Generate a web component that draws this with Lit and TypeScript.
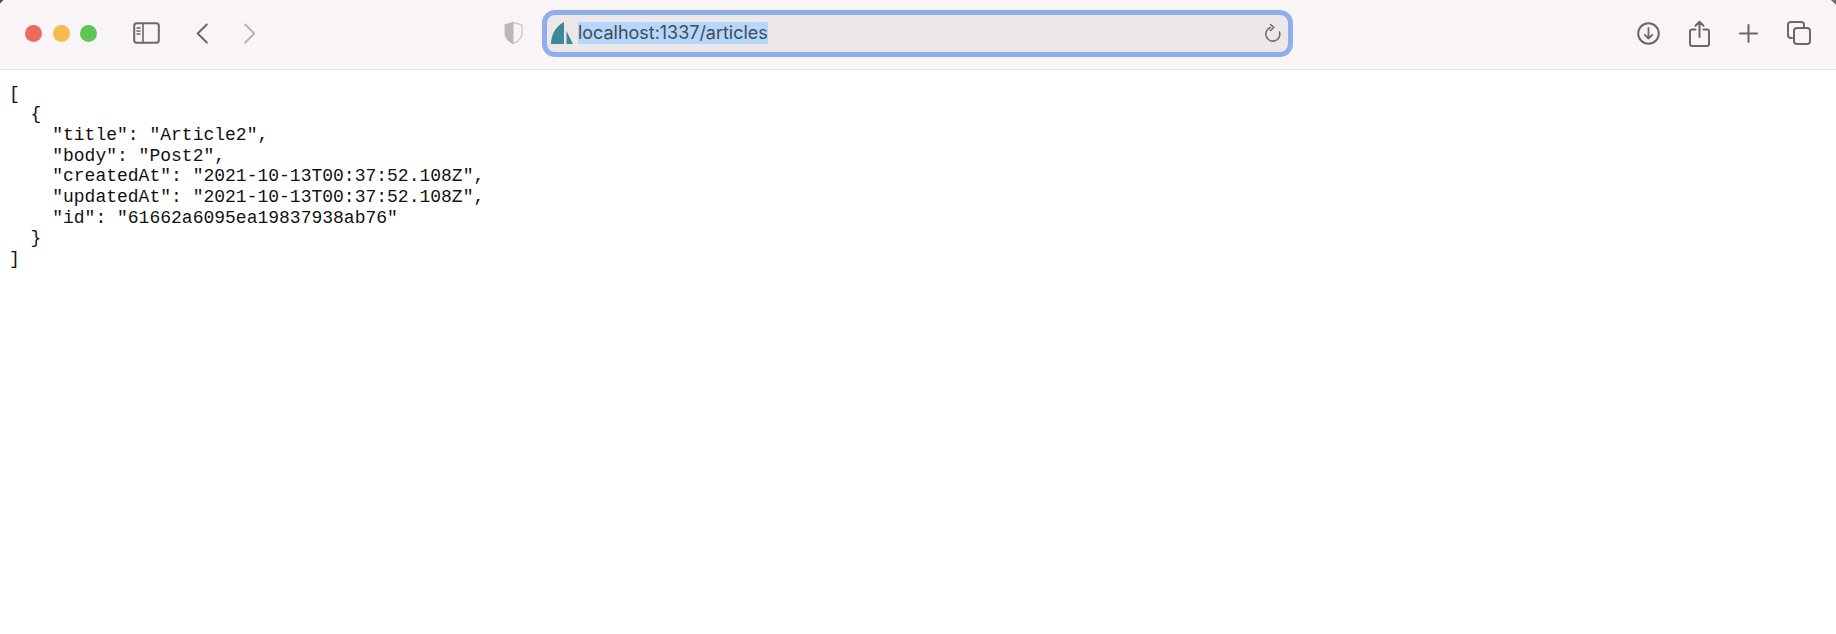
import { LitElement, html, css } from "lit";
import { customElement } from "lit/decorators.js";

const JSON_TEXT = `[
  {
    "title": "Article2",
    "body": "Post2",
    "createdAt": "2021-10-13T00:37:52.108Z",
    "updatedAt": "2021-10-13T00:37:52.108Z",
    "id": "61662a6095ea19837938ab76"
  }
]`;

@customElement("app-root")
export class AppRoot extends LitElement {
  static styles = css`
    :host { display: block; width: 1836px; height: 634px; background: #fff; overflow: hidden; position: relative; }
    .toolbar { height: 70px; box-sizing: border-box; border-bottom: 1px solid #e6e2e3; background: #f9f4f5; display: flex; align-items: center; padding: 0 0 3px 25px; }
    .lights { display: flex; gap: 10.5px; }
    .light { width: 17px; height: 17px; border-radius: 50%; }
    .red { background: #ee6a5f; } .yellow { background: #f5bd4f; } .green { background: #61c454; }
    svg { display: block; flex: none; fill: none; stroke: #6b6868; stroke-width: 2; stroke-linecap: round; stroke-linejoin: round; }
    .side { margin-left: 36px; }
    .back { margin-left: 36px; }
    .forward { margin-left: 36px; stroke: #b8b5b5; }
    .shield { margin-left: 248px; }
    .url { margin-left: 19px; width: 751px; height: 47px; box-sizing: border-box; border: 5px solid #91aeec; border-radius: 13px; background: #ece7e8; display: flex; align-items: center; padding: 0 7px 0 4px; }
    .address { margin-left: 5px; background: #b3d7fe; color: #4b4a4c; font: 18px/22px Inter, "Liberation Sans", sans-serif; letter-spacing: -0.03px; white-space: nowrap; }
    .reload { margin-left: auto; }
    .actions { margin-left: 344px; display: flex; align-items: center; gap: 29px; }
    pre { margin: 0; padding: 13.5px 0 0 9px; font: 18px/20.7px "Liberation Mono", monospace; color: #111; }
    .corner { position: absolute; top: 0; }
    .corner.left { left: 0; }
    .corner.right { right: 0; }
  `;

  render() {
    return html`
      <div class="toolbar">
        <div class="lights"><div class="light red"></div><div class="light yellow"></div><div class="light green"></div></div>
        <svg class="side" width="27" height="22" viewBox="0 0 27 22"><rect x="1.200" y="1.200" width="24.600" height="19.600" rx="2.500"/><path d="M10 1.500v19M4 6h3M4 9h3M4 12h3" stroke-width="1.600"/></svg>
        <svg class="back" width="12" height="21" viewBox="0 0 12 21"><path d="M10.800 1.500 1.700 10.500l9.100 9"/></svg>
        <svg class="forward" width="12" height="21" viewBox="0 0 12 21"><path d="M1.200 1.500l9.100 9-9.100 9"/></svg>
        <svg class="shield" width="19" height="24" viewBox="0 0 19 24"><path d="M9.500 1.500 18 4v8c0 5-4 8.500-8.500 10.500C5 20.500 1 17 1 12V4z" stroke="#cfcdcd" stroke-width="1.500"/><path d="M9.500 1 1 3.500V12c0 5 4 8.500 8.500 11z" fill="#b9b7b7" stroke="none"/></svg>
        <div class="url">
          <svg width="22" height="22" viewBox="0 0 22 22"><path d="M13 0V22H0C0 13 4.500 4.500 13 0z" fill="#3f8799" stroke="none"/><path d="M15.500 9 22 22H15.500z" fill="#3f8799" stroke="none"/></svg>
          <span class="address">localhost:1337/articles</span>
          <svg class="reload" width="16" height="20" viewBox="0 0 16 20"><path d="M5.500 4.500A7 7 0 1 0 14.500 9" stroke-width="1.500"/><path d="M5.500 1.500 8.800 4.500 5.500 7.500" stroke-width="1.500"/></svg>
        </div>
        <div class="actions">
          <svg width="23" height="23" viewBox="0 0 23 23"><circle cx="11.500" cy="11.500" r="10.300"/><path d="M11.500 6v10.500M7.800 12.800l3.700 3.700 3.700-3.700" stroke-width="1.800"/></svg>
          <svg width="21" height="27" viewBox="0 0 21 27"><path d="M6.500 9.500H3a2 2 0 0 0-2 2V24a2 2 0 0 0 2 2h15a2 2 0 0 0 2-2V11.500a2 2 0 0 0-2-2H14.500M10.500 17V2M6.500 5.800 10.500 1.800 14.500 5.800"/></svg>
          <svg width="19" height="19" viewBox="0 0 19 19"><path d="M9.500 1v17M1 9.500h17"/></svg>
          <svg width="24" height="24" viewBox="0 0 24 24"><rect x="7" y="7" width="16" height="16" rx="3"/><path d="M5 17H4a3 3 0 0 1-3-3V4a3 3 0 0 1 3-3h10a3 3 0 0 1 3 3v2"/></svg>
        </div>
      </div>
      <pre>${JSON_TEXT}</pre>
      <svg class="corner left" width="4" height="4" viewBox="0 0 4 4"><path d="M0 0H3.500L0 3.500z" fill="#4a4a4a" stroke="none"/></svg>
      <svg class="corner right" width="5" height="5" viewBox="0 0 5 5"><path d="M0 0H5V5z" fill="#6e6e6e" stroke="none"/></svg>
    `;
  }
}
